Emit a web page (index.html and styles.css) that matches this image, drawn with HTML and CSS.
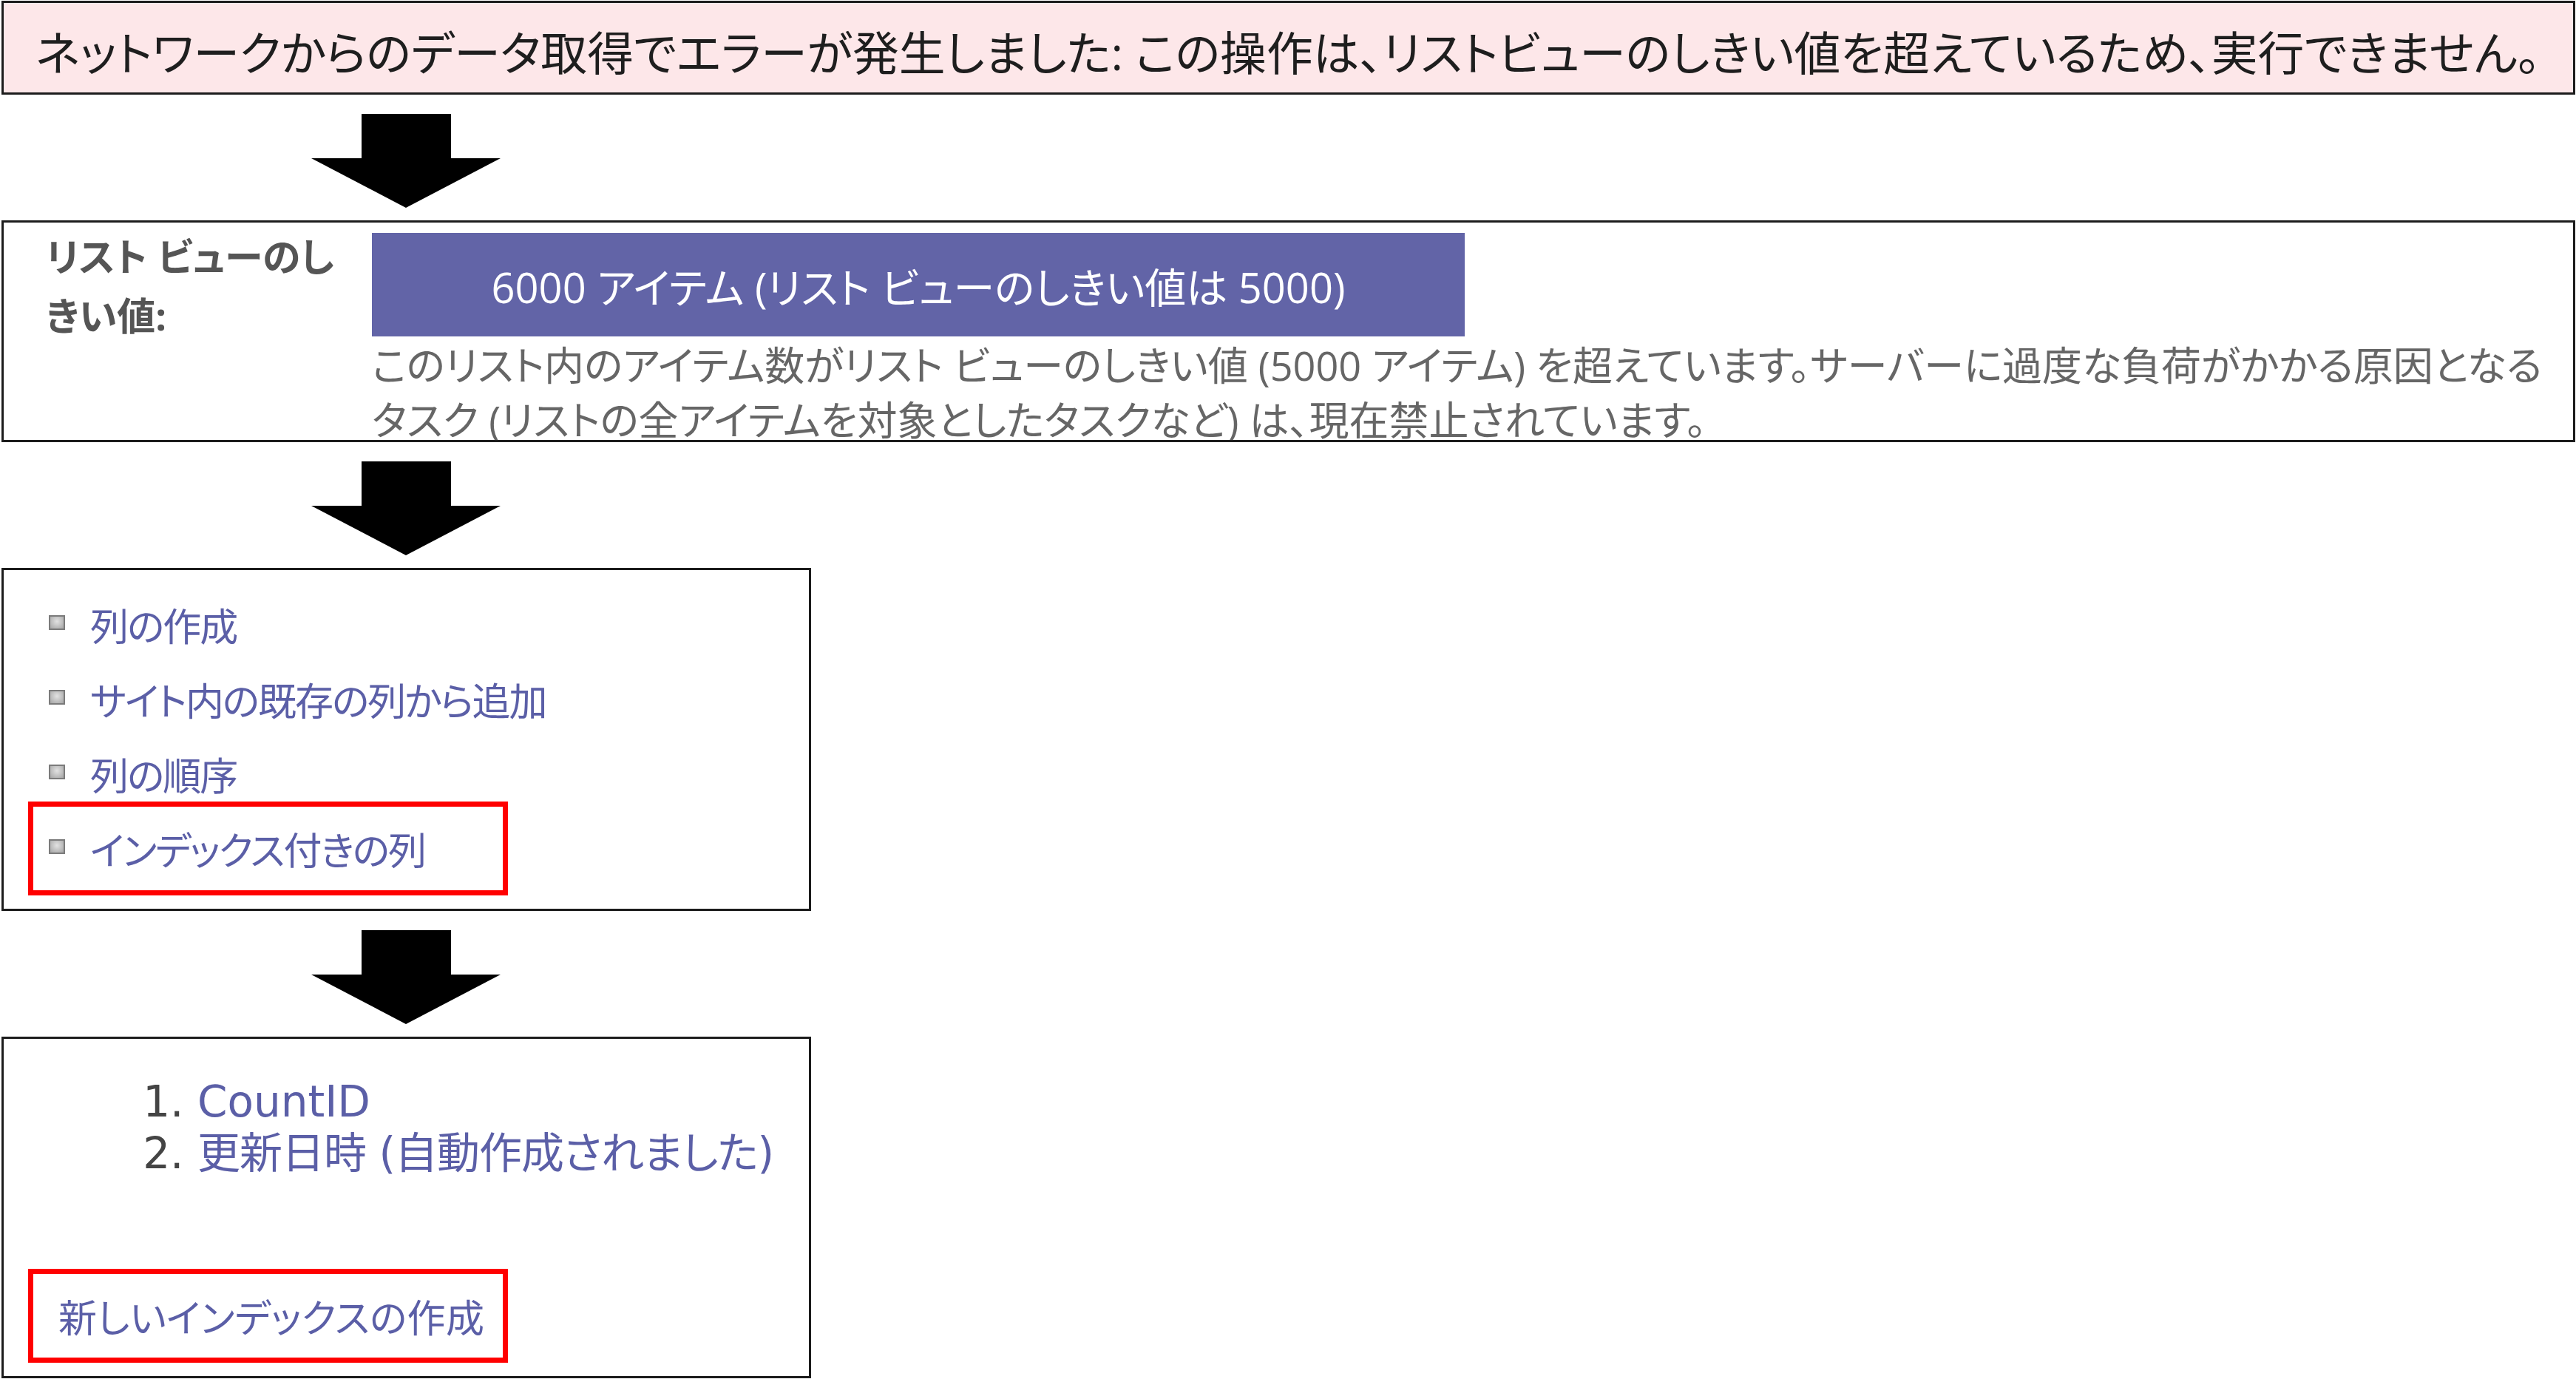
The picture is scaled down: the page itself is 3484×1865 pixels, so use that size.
FILE: index.html
```html
<!DOCTYPE html>
<html lang="ja">
<head>
    <meta charset="UTF-8">
    <meta name="viewport" content="width=device-width, initial-scale=1.0">
    <title>リスト ビューのしきい値</title>
    <link rel="stylesheet" href="styles.css">
</head>
<body>
    <div class="page">
        <div class="box error-box">ネットワークからのデータ取得でエラーが発生しました: この操作は、リストビューのしきい値を超えているため、実行できません。</div>

        <div class="arrow">
            <svg viewBox="0 0 256 127"><polygon points="68,0 189,0 189,60 256,60 128,127 0,60 68,60"/></svg>
        </div>

        <div class="box threshold-box">
            <div class="label">リスト ビューのしきい値:</div>
            <div class="detail">
                <div class="count-bar">6000 アイテム (リスト ビューのしきい値は 5000)</div>
                <p class="desc">このリスト内のアイテム数がリスト ビューのしきい値 (5000 アイテム) を超えています。サーバーに過度な負荷がかかる原因となるタスク (リストの全アイテムを対象としたタスクなど) は、現在禁止されています。</p>
            </div>
        </div>

        <div class="arrow">
            <svg viewBox="0 0 256 127"><polygon points="68,0 189,0 189,60 256,60 128,127 0,60 68,60"/></svg>
        </div>

        <div class="box small-box">
            <ul class="column-links">
                <li><a href="#">列の作成</a></li>
                <li><a href="#">サイト内の既存の列から追加</a></li>
                <li><a href="#">列の順序</a></li>
                <li class="marked"><a href="#">インデックス付きの列</a></li>
            </ul>
        </div>

        <div class="arrow">
            <svg viewBox="0 0 256 127"><polygon points="68,0 189,0 189,60 256,60 128,127 0,60 68,60"/></svg>
        </div>

        <div class="box small-box index-box">
            <ol class="index-list">
                <li><a href="#">CountID</a></li>
                <li><a href="#" class="auto">更新日時 (自動作成されました)</a></li>
            </ol>
            <a class="new-index" href="#">新しいインデックスの作成</a>
        </div>
    </div>
</body>
</html>
```

FILE: styles.css
```css
body {
    margin: 0;
    padding: 0;
    background-color: #fff;
    font-family: "Open Sans", "Noto Sans CJK JP", sans-serif;
    font-feature-settings: "palt";
}
a {
    color: #5b5fa7;
    text-decoration: none;
}
.page {
    display: flex;
    flex-direction: column;
    align-items: flex-start;
    padding: 1px 0 0 2px;
}
.box {
    box-sizing: border-box;
    border: 3px solid #1c1c1c;
    background-color: #fff;
    overflow: hidden;
}

/* error message */
.error-box {
    width: 3481px;
    height: 127px;
    display: flex;
    align-items: center;
    padding: 6px 0 0 43px;
    background-color: #fde7e9;
    color: #1e1e1e;
    font-size: 62.8px;
    white-space: nowrap;
}

/* big down arrows between the steps */
.arrow {
    box-sizing: border-box;
    height: 170px;
    padding: 26px 0 0 419px;
}
.arrow svg {
    display: block;
    width: 256px;
    height: 127px;
    fill: #000;
}

/* list view threshold */
.threshold-box {
    width: 3481px;
    height: 300px;
    display: grid;
    grid-template-columns: 441px 1fr;
    padding: 14px 0 0 57px;
}
.label {
    width: 400px;
    margin-top: -8px;
    font-size: 52px;
    font-weight: bold;
    line-height: 80px;
    color: #555;
}
.count-bar {
    width: 1478px;
    height: 140px;
    display: flex;
    align-items: center;
    justify-content: center;
    background-color: #6264a7;
    color: #fff;
    font-size: 56px;
}
.desc {
    margin: 2px 0 0;
    padding-right: 20px;
    font-size: 54px;
    line-height: 74px;
    color: #666;
}

/* column settings */
.small-box {
    width: 1095px;
    height: 464px;
}
.column-links {
    list-style: none;
    margin: 0;
    padding: 23px 0 0 46px;
}
.column-links li {
    box-sizing: border-box;
    display: flex;
    align-items: center;
    height: 101px;
    padding-left: 15px;
    font-size: 52px;
    letter-spacing: -2px;
}
.column-links li::before {
    content: "";
    flex: none;
    box-sizing: border-box;
    width: 22px;
    height: 20px;
    margin-right: 34px;
    border: 2px solid #7b7b7b;
    background: radial-gradient(circle at 50% 40%, #e2e2e2, #a4a4a4);
    transform: translateY(-3px);
}
.column-links li.marked {
    width: 623px;
    outline: 7px solid #ff0000;
    outline-offset: 6px;
}

/* indexed columns */
.index-box {
    height: 462px;
    display: flex;
    flex-direction: column;
}
.index-list {
    margin: 50px 0 0;
    padding-left: 262px;
    font-family: "DejaVu Sans", "Noto Sans CJK JP", sans-serif;
    font-size: 58px;
    line-height: 70px;
    color: #444;
}
.index-list .auto {
    letter-spacing: -1px;
}
.new-index {
    box-sizing: border-box;
    display: flex;
    align-items: center;
    width: 649px;
    height: 127px;
    margin: auto 0 18px 33px;
    padding-left: 34px;
    border: 7px solid #ff0000;
    font-size: 52px;
    letter-spacing: 0.3px;
    white-space: nowrap;
}
```
